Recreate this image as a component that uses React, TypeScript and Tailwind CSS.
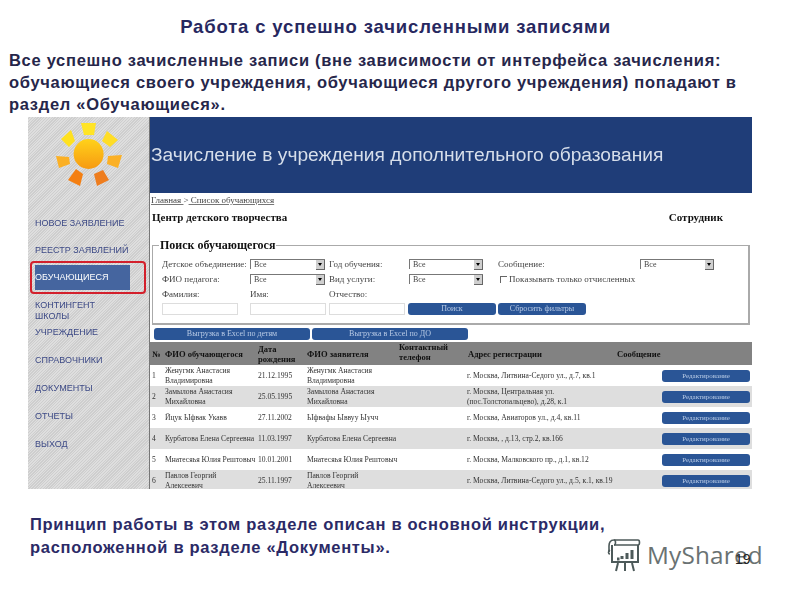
const nav = ["НОВОЕ ЗАЯВЛЕНИЕ", "РЕЕСТР ЗАЯВЛЕНИЙ"];
const navBottom = ["УЧРЕЖДЕНИЕ", "СПРАВОЧНИКИ", "ДОКУМЕНТЫ", "ОТЧЕТЫ", "ВЫХОД"];

const rows = [
  { n: 1, name: ["Женугмк Анастасия", "Владимировна"], date: "21.12.1995", parent: ["Женугмк Анастасия", "Владимировна"], addr: ["г. Москва, Литвина-Седого ул., д.7, кв.1"] },
  { n: 2, name: ["Замылова Анастасия", "Михайловна"], date: "25.05.1995", parent: ["Замылова Анастасия", "Михайловна"], addr: ["г. Москва, Центральная ул.", "(пос.Толстопальцево), д.28, к.1"] },
  { n: 3, name: ["Йцук Ыфвак Укавв"], date: "27.11.2002", parent: ["Ыфвафы Ыввуу Ыучч"], addr: ["г. Москва, Авиаторов ул., д.4, кв.11"] },
  { n: 4, name: ["Курбатова Елена Сергеевна"], date: "11.03.1997", parent: ["Курбатова Елена Сергеевна"], addr: ["г. Москва, , д.13, стр.2, кв.166"] },
  { n: 5, name: ["Мнатесяья Юлия Рештовыч"], date: "10.01.2001", parent: ["Мнатесяья Юлия Рештовыч"], addr: ["г. Москва, Малковского пр., д.1, кв.12"] },
  { n: 6, name: ["Павлов Георгий", "Алексеевич"], date: "25.11.1997", parent: ["Павлов Георгий", "Алексеевич"], addr: ["г. Москва, Литвина-Седого ул., д.5, к.1, кв.19"] },
];

function Sun() {
  return (
    <svg width="74" height="68" viewBox="0 0 74 68" className="block">
      <defs>
        <linearGradient id="core" x1="0" y1="0" x2="0" y2="1">
          <stop offset="0" stopColor="#ffd21a" />
          <stop offset="1" stopColor="#f79a12" />
        </linearGradient>
      </defs>
      <circle cx="36.6" cy="34" r="15" fill="url(#core)" />
      <polygon points="29,3 44,3 42,15 32,15" fill="#ffe426" />
      <polygon points="9,19 19,10 23,21 17,27" fill="#ffe11f" />
      <polygon points="55,11 66,20 58,27 50,21" fill="#ffdd26" />
      <polygon points="4,36 7,48 18,44 17,37" fill="#fbb025" />
      <polygon points="70,35 66,48 55,44 56,36" fill="#fbb025" />
      <polygon points="16,60 28,66 31,54 24,49" fill="#f47f12" />
      <polygon points="45,66 57,60 51,50 42,54" fill="#ee7d1e" />
    </svg>
  );
}

function Select({ w }: { w: string }) {
  return (
    <div className={`${w} h-[10px] flex items-center justify-between border-l border-t border-[#777] bg-white`}>
      <span className="pl-[3px] text-[8px] leading-none">Все</span>
      <span className="w-[9px] h-[10px] bg-[#cfcfcf] border-r border-b border-[#666] flex items-center justify-center">
        <span className="border-x-[2px] border-x-transparent border-t-[3px] border-t-black" />
      </span>
    </div>
  );
}

function Btn({ w, label, h = "h-[12px]" }: { w: string; label: string; h?: string }) {
  return (
    <div className={`${w} ${h} rounded-[3px] bg-[#2a5596] text-[#b9cbe6] text-[8px] flex items-center justify-center leading-none`}>
      {label}
    </div>
  );
}

function Logo() {
  return (
    <div className="absolute left-[607px] top-[537px] flex items-center gap-[6px]">
      <svg width="34" height="36" viewBox="0 0 34 36" fill="none" stroke="#4d5a5a" strokeWidth="1.6">
        <path d="M7 3h24c2 0 2 5 0 5H7" />
        <path d="M7 3C3 3 2 6 2 9v6" />
        <path d="M7 3c2 0 2 5 0 5" />
        <path d="M5 8v17h26V8" strokeWidth="2" />
        <path d="M3 13c-2 1-2 4 0 4" />
        <path d="M11 26l-2 8M18 26v8M25 26l2 8" strokeWidth="2" />
        <path d="M10 22h2.5M15 22v-3M20 22v-6M25 22v-9" strokeWidth="3" />
      </svg>
      <span className="font-['Open_Sans',sans-serif] text-[24.3px] leading-none text-[#6a7272] tracking-[0.2px]">MyShared</span>
    </div>
  );
}

export default function App() {
  return (
    <div className="relative w-[800px] h-[600px] overflow-hidden bg-white font-['Liberation_Sans',Arial,sans-serif]">
      <h1 className="pt-[17px] pr-[9px] text-center text-[18.5px] leading-[20px] font-bold text-[#27285f] tracking-[0.85px]">
        Работа с успешно зачисленными записями
      </h1>
      <p className="mt-[12px] ml-[9px] text-[16.5px] leading-[22px] font-bold text-[#26264a] tracking-[0.7px] whitespace-nowrap">
        Все успешно зачисленные записи (вне зависимости от интерфейса зачисления:<br />
        обучающиеся своего учреждения, обучающиеся другого учреждения) попадают в<br />
        раздел «Обучающиеся».
      </p>

      <div className="mt-[2px] ml-[28px] w-[724px] h-[372px] flex blur-[0.35px] font-['Liberation_Serif',serif] text-[#222]">
        <aside className="w-[122px] shrink-0 border-r border-[#777] bg-[repeating-linear-gradient(135deg,#dedede_0,#dedede_1px,#cecece_1px,#cecece_2px)] font-['Liberation_Sans',sans-serif] text-[9px] text-[#3d4a86]">
          <div className="pt-[3px] pl-[24px]">
            <Sun />
          </div>
          <div className="mt-[30px] pl-[7px] flex flex-col gap-[16px]">
            {nav.map((t) => (
              <div key={t} className="h-[11px] leading-[11px] whitespace-nowrap">{t}</div>
            ))}
          </div>
          <div className="mt-[5px] ml-[2px] w-[116px] h-[33px] border-2 border-[#d3202c] rounded-[4px] flex items-center pl-[3px]">
            <div className="w-[95px] h-[25px] bg-[#45659f] text-white flex items-center">ОБУЧАЮЩИЕСЯ</div>
          </div>
          <div className="mt-[6px] pl-[7px] leading-[10.5px]">КОНТИНГЕНТ<br />ШКОЛЫ</div>
          <div className="mt-[6px] pl-[7px] flex flex-col gap-[17px]">
            {navBottom.map((t) => (
              <div key={t} className="h-[11px] leading-[11px]">{t}</div>
            ))}
          </div>
        </aside>

        <main className="flex-1 min-w-0 bg-white overflow-hidden">
          <div className="h-[76px] bg-[#1f3d78] flex items-center pl-[1px] pt-[1px] text-[#d6deea] text-[19.2px] font-['Liberation_Sans',sans-serif] whitespace-nowrap">
            Зачисление в учреждения дополнительного образования
          </div>
          <div className="pl-[1px] pt-[2px] text-[9px] leading-[11px] text-[#444] underline decoration-[#777]">
            Главная <span className="inline-block no-underline">&gt;</span> Список обучающихся
          </div>
          <div className="mt-[5px] flex justify-between pl-[2px] pr-[29px] text-[11px] leading-[12px] font-bold text-[#111]">
            <span>Центр детского творчества</span>
            <span>Сотрудник</span>
          </div>

          <fieldset className="mt-[17px] ml-[2px] w-[598px] h-[85px] border border-[#aaa] border-r-2 border-b-2 pl-[9px]">
            <legend className="ml-[-3px] px-[1px] text-[12px] leading-[11px] font-bold text-[#111]">Поиск обучающегося</legend>
            <div className="pt-[8px] text-[9px] text-[#444] leading-[10px]">
              <div className="flex items-center">
                <span className="w-[88px]">Детское объединение:</span>
                <Select w="w-[75px]" />
                <span className="w-[80px] ml-[4px]">Год обучения:</span>
                <Select w="w-[74px]" />
                <span className="w-[142px] ml-[15px]">Сообщение:</span>
                <Select w="w-[74px]" />
              </div>
              <div className="flex items-center mt-[5px]">
                <span className="w-[88px]">ФИО педагога:</span>
                <Select w="w-[75px]" />
                <span className="w-[80px] ml-[4px]">Вид услуги:</span>
                <Select w="w-[74px]" />
                <span className="ml-[17px] w-[7px] h-[7px] border-l border-t border-[#666] bg-white" />
                <span className="ml-[2px] tracking-[0.05px]">Показывать только отчисленных</span>
              </div>
              <div className="flex mt-[5px]">
                <span className="w-[88px]">Фамилия:</span>
                <span className="w-[79px]">Имя:</span>
                <span>Отчество:</span>
              </div>
              <div className="flex items-center mt-[4px]">
                <div className="w-[76px] h-[12px] border border-[#ddd]" />
                <div className="w-[76px] h-[12px] border border-[#ddd] ml-[12px]" />
                <div className="w-[76px] h-[12px] border border-[#ddd] ml-[3px]" />
                <Btn w="w-[88px] ml-[3px]" label="Поиск" />
                <Btn w="w-[88px] ml-[2px]" label="Сбросить фильтры" />
              </div>
            </div>
          </fieldset>

          <div className="mt-[3px] ml-[4px] flex gap-[2px]">
            <Btn w="w-[156px]" label="Выгрузка в Excel по детям" />
            <Btn w="w-[156px]" label="Выгрузка в Excel по ДО" />
          </div>

          <table className="mt-[2px] w-[602px] table-fixed border-collapse text-[7.6px] leading-[10px] text-[#333]">
            <colgroup>
              <col className="w-[15px]" />
              <col className="w-[92px]" />
              <col className="w-[49px]" />
              <col className="w-[93px]" />
              <col className="w-[68px]" />
              <col className="w-[150px]" />
              <col className="w-[46px]" />
              <col />
            </colgroup>
            <thead>
              <tr className="h-[23px] bg-[#828282] text-[8.5px] font-bold text-[#111] text-left">
                <th className="pl-[2px] font-bold">№</th>
                <th className="font-bold">ФИО обучающегося</th>
                <th className="font-bold pl-[1px]">Дата<br />рождения</th>
                <th className="font-bold pl-[1px]">ФИО заявителя</th>
                <th className="font-bold pb-[3px]">Контактный<br />телефон</th>
                <th className="font-bold pl-[1px]">Адрес регистрации</th>
                <th className="font-bold whitespace-nowrap" colSpan={2}>Сообщение</th>
              </tr>
            </thead>
            <tbody>
              {rows.map((r, i) => (
                <tr key={r.n} className={`h-[21px] ${i % 2 ? "bg-[#dedede]" : "bg-white"}`}>
                  <td className="pl-[2px]">{r.n}</td>
                  <td>{r.name.map((l) => <div key={l} className="whitespace-nowrap">{l}</div>)}</td>
                  <td className="pl-[1px]">{r.date}</td>
                  <td className="pl-[1px]">{r.parent.map((l) => <div key={l} className="whitespace-nowrap">{l}</div>)}</td>
                  <td />
                  <td>{r.addr.map((l) => <div key={l} className="whitespace-nowrap">{l}</div>)}</td>
                  <td />
                  <td>
                    <div className="ml-[-1px] w-[88px] h-[12px] rounded-[3px] bg-[#2a5596] text-[#b9cbe6] text-[7px] flex items-center justify-center">Редактирование</div>
                  </td>
                </tr>
              ))}
            </tbody>
          </table>
        </main>
      </div>

      <p className="mt-[24px] ml-[30px] text-[16.5px] leading-[23px] font-bold text-[#2b2a66] tracking-[0.7px] whitespace-nowrap">
        Принцип работы в этом разделе описан в основной инструкции,<br />
        расположенной в разделе «Документы».
      </p>

      <Logo />
      <span className="absolute left-[735px] top-[551px] text-[14px] leading-[16px] text-[#222]">19</span>
    </div>
  );
}
